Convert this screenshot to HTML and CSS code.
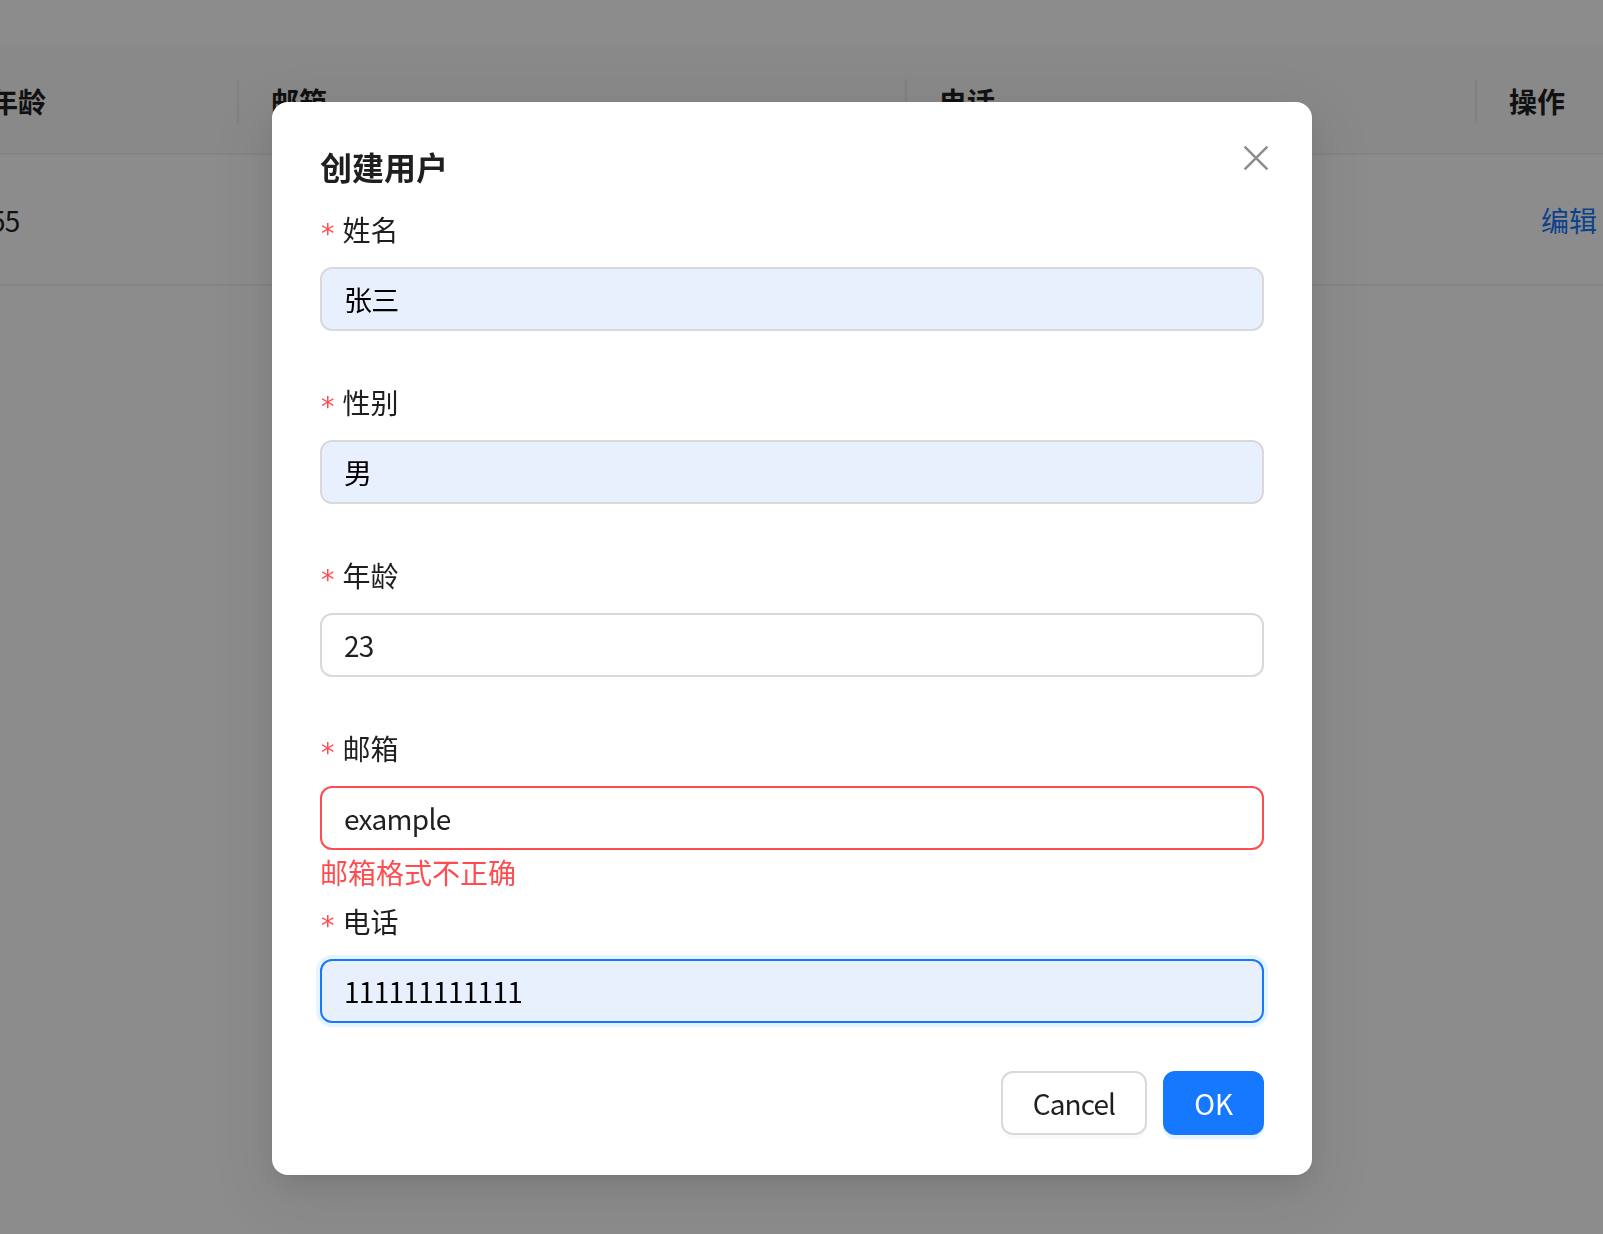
FILE: index.html
```html
<!DOCTYPE html>
<html lang="zh-CN">
<head>
<meta charset="utf-8">
<title>创建用户</title>
<link rel="stylesheet" href="styles.css">
</head>
<body>
<div class="page">
  <div class="topband"></div>
  <div class="table">
    <div class="th sep">年龄</div>
    <div class="th sep">邮箱</div>
    <div class="th sep">电话</div>
    <div class="th">操作</div>
    <div class="td">55</div>
    <div class="td">1111@qq.com</div>
    <div class="td">13800000000</div>
    <div class="td"><span class="link">编辑</span></div>
  </div>
</div>

<div class="mask"></div>

<div class="modal-wrap">
  <div class="modal">
    <button class="close" type="button" aria-label="Close">
      <svg viewBox="0 0 24 24" width="26" height="26"><path d="M1.5 1.5 L22.5 22.5 M22.5 1.5 L1.5 22.5" stroke="currentColor" stroke-width="2.3" fill="none"/></svg>
    </button>
    <div class="title">创建用户</div>
    <form class="form">
      <div class="item">
        <label class="label"><span class="req">*</span>姓名</label>
        <div class="input autofill">张三</div>
      </div>
      <div class="item">
        <label class="label"><span class="req">*</span>性别</label>
        <div class="input autofill">男</div>
      </div>
      <div class="item">
        <label class="label"><span class="req">*</span>年龄</label>
        <div class="input">23</div>
      </div>
      <div class="item has-error">
        <label class="label"><span class="req">*</span>邮箱</label>
        <div class="input error">example</div>
        <div class="explain">邮箱格式不正确</div>
      </div>
      <div class="item">
        <label class="label"><span class="req">*</span>电话</label>
        <div class="input autofill focused">111111111111</div>
      </div>
    </form>
    <div class="footer">
      <button class="btn" type="button">Cancel</button>
      <button class="btn primary" type="button">OK</button>
    </div>
  </div>
</div>
</body>
</html>
```

FILE: styles.css
```css
html, body {
  margin: 0;
  padding: 0;
  background: #ffffff;
  overflow: hidden;
}

body {
  width: 1603px;
  height: 1234px;
  font-family: "Noto Sans CJK SC", "Noto Sans", sans-serif;
  color: rgba(0, 0, 0, 0.88);
  font-size: 28px;
}

.page {
  width: 1603px;
  height: 1234px;
  background: #ffffff;
}

.topband {
  height: 47px;
  background: #ffffff;
}

.table {
  display: grid;
  grid-template-columns: 281px 668px 570px 200px;
  margin-left: -42px;
}

.th {
  position: relative;
  background: #fafafa;
  height: 108px;
  line-height: 44px;
  padding: 32px;
  box-sizing: border-box;
  font-weight: 700;
  color: #1f1f1f;
  border-bottom: 2px solid #f0f0f0;
  white-space: nowrap;
}

.th.sep::before {
  content: "";
  position: absolute;
  right: 0;
  top: 32px;
  width: 2px;
  height: 44px;
  background: rgba(5, 5, 5, 0.06);
}

.td {
  height: 131px;
  box-sizing: border-box;
  padding: 0 32px;
  display: flex;
  align-items: center;
  border-bottom: 2px solid #f0f0f0;
  background: #ffffff;
  white-space: nowrap;
  letter-spacing: -0.8px;
}

.link {
  color: #1677ff;
  padding: 0 32px;
  letter-spacing: 0;
}

.mask {
  position: fixed;
  inset: 0;
  background: rgba(0, 0, 0, 0.45);
}

.modal-wrap {
  position: absolute;
  top: 0;
  left: 0;
  right: 0;
  padding-top: 102px;
}

.modal {
  position: relative;
  margin-left: 272px;
  width: 1040px;
  box-sizing: border-box;
  padding: 40px 48px;
  background: #ffffff;
  border-radius: 16px;
  box-shadow: 0 12px 32px 0 rgba(0, 0, 0, 0.08),
              0 6px 12px -8px rgba(0, 0, 0, 0.12),
              0 18px 56px 16px rgba(0, 0, 0, 0.05);
}

.close {
  position: absolute;
  top: 34px;
  right: 34px;
  width: 44px;
  height: 44px;
  padding: 0;
  border: 0;
  background: transparent;
  color: #8c8c8c;
  display: flex;
  align-items: center;
  justify-content: center;
}

.title {
  font-size: 32px;
  line-height: 48px;
  font-weight: 700;
  color: #1f1f1f;
  margin-bottom: 16px;
}

.form {
  margin: 0;
}

.item {
  margin-bottom: 48px;
}

.item.has-error {
  margin-bottom: 0;
}

.label {
  display: flex;
  align-items: center;
  height: 45px;
  line-height: 45px;
  margin-bottom: 16px;
  color: #1f1f1f;
  padding-top: 1px;
  box-sizing: border-box;
}

.req {
  color: #ff4d4f;
  font-family: "DejaVu Sans", sans-serif;
  font-size: 27px;
  margin-right: 8px;
  margin-left: 1px;
  line-height: 1;
  position: relative;
  top: 4px;
}

.input {
  height: 64px;
  box-sizing: border-box;
  border: 2px solid #d9d9d9;
  border-radius: 12px;
  padding: 8px 22px;
  line-height: 44px;
  background: #ffffff;
  color: rgba(0, 0, 0, 0.88);
  letter-spacing: -0.7px;
}

.input.autofill {
  background: #e8f0fe;
  color: #000000;
}

.input.error {
  border-color: #ff4d4f;
}

.input.focused {
  border-color: #1677ff;
  box-shadow: 0 0 0 4px rgba(5, 145, 255, 0.1);
}

.explain {
  color: #ff4d4f;
  line-height: 44px;
  height: 48px;
}

.footer {
  display: flex;
  justify-content: flex-end;
  gap: 16px;
}

.btn {
  height: 64px;
  box-sizing: border-box;
  padding: 8px 30px;
  border: 2px solid #d9d9d9;
  border-radius: 12px;
  background: #ffffff;
  color: rgba(0, 0, 0, 0.88);
  font-family: "Noto Sans CJK SC", "Noto Sans", sans-serif;
  font-size: 28px;
  line-height: 44px;
  letter-spacing: -0.9px;
  box-shadow: 0 4px 0 rgba(0, 0, 0, 0.02);
}

.btn.primary {
  background: #1677ff;
  border-color: #1677ff;
  color: #ffffff;
  letter-spacing: 0;
  padding: 8px 29px;
  box-shadow: 0 4px 0 rgba(5, 145, 255, 0.1);
}
```
